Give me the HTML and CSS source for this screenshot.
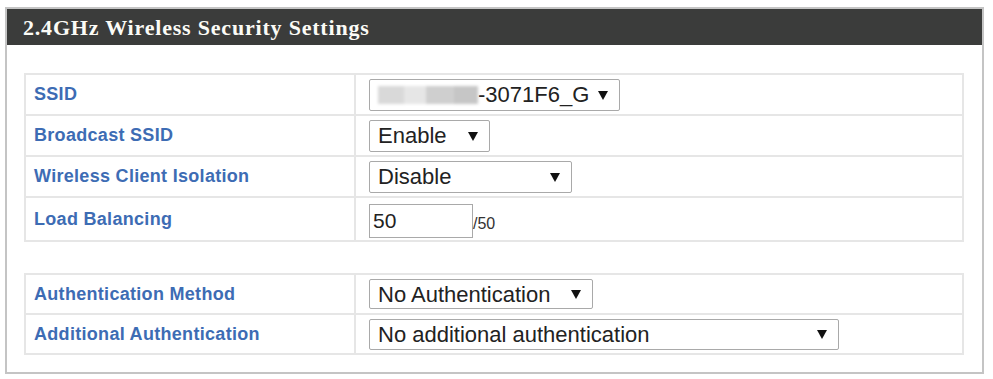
FILE: index.html
```html
<!DOCTYPE html>
<html lang="en">
<head>
  <meta charset="UTF-8" />
  <title>2.4GHz Wireless Security Settings</title>
  <link rel="stylesheet" href="styles.css">
</head>
<body>
  <div class="panel">
    <div class="panel-title">2.4GHz Wireless Security Settings</div>

    <div class="panel-body">
      <!-- basic wireless options -->
      <table class="settings">
        <tr>
          <td class="label">SSID</td>
          <td class="value">
            <span class="dropdown">
              <select class="ssid-select">
                <option>-3071F6_G</option>
              </select>
              <span class="blur"><i></i><i></i><i></i><i></i></span>
            </span>
          </td>
        </tr>
        <tr>
          <td class="label">Broadcast SSID</td>
          <td class="value">
            <span class="dropdown">
              <select class="w-enable">
                <option>Enable</option>
                <option>Disable</option>
              </select>
            </span>
          </td>
        </tr>
        <tr>
          <td class="label">Wireless Client Isolation</td>
          <td class="value">
            <span class="dropdown">
              <select class="w-disable">
                <option>Disable</option>
                <option>Enable</option>
              </select>
            </span>
          </td>
        </tr>
        <tr class="tall">
          <td class="label">Load Balancing</td>
          <td class="value">
            <input type="text" class="num" value="50"><span class="max">/50</span>
          </td>
        </tr>
      </table>

      <!-- authentication -->
      <table class="settings auth">
        <tr>
          <td class="label">Authentication Method</td>
          <td class="value">
            <span class="dropdown">
              <select class="w-auth">
                <option>No Authentication</option>
              </select>
            </span>
          </td>
        </tr>
        <tr>
          <td class="label">Additional Authentication</td>
          <td class="value">
            <span class="dropdown">
              <select class="w-additional">
                <option>No additional authentication</option>
              </select>
            </span>
          </td>
        </tr>
      </table>
    </div>
  </div>
</body>
</html>
```

FILE: styles.css
```css
body {
  margin: 0;
  background: #fff;
  font-family: "Liberation Sans", Arial, sans-serif;
}

.panel {
  margin: 7px 0 0 5px;
  width: 979px;
  box-sizing: border-box;
  border: 2px solid #c4c4c4;
  background: #fff;
}

.panel-title {
  height: 36px;
  line-height: 37px;
  background: #3b3c3b;
  color: #fbfbf6;
  font-family: "Liberation Serif", "Times New Roman", serif;
  font-weight: bold;
  font-size: 22px;
  letter-spacing: 0.8px;
  padding-left: 16px;
}

.panel-body {
  padding: 28px 18px 17px 17px;
}

.settings {
  width: 100%;
  border-collapse: collapse;
}

.settings td {
  border: 2px solid #e6e6e6;
  height: 39px;
  padding: 0;
}

.settings tr.tall td {
  height: 42px;
}

.settings.auth {
  margin-top: 31px;
}

.settings.auth td {
  height: 38px;
}

.label {
  width: 320px;
  padding-left: 8px !important;
  color: #3d6cb4;
  font-weight: bold;
  font-size: 18px;
  letter-spacing: 0.3px;
}

.value {
  padding-left: 13px !important;
}

/* selects */
.dropdown {
  position: relative;
  display: inline-block;
  vertical-align: middle;
}

.dropdown::after {
  content: "";
  position: absolute;
  right: 12px;
  top: 50%;
  margin-top: -4px;
  border-left: 5px solid transparent;
  border-right: 5px solid transparent;
  border-top: 9px solid #111;
  pointer-events: none;
}

.dropdown select {
  -webkit-appearance: none;
  appearance: none;
  height: 32px;
  border: 1px solid #a9a9a9;
  border-radius: 2px;
  background: #fff;
  color: #222;
  font-family: "Liberation Sans", Arial, sans-serif;
  font-size: 22px;
  padding: 0 0 0 8px;
  margin: 0;
  display: block;
}

.ssid-select { width: 251px; padding-left: 108px !important; }
.w-enable { width: 121px; }
.w-disable { width: 203px; }
.w-auth { width: 224px; height: 30px !important; }
.w-additional { width: 470px; height: 31px !important; }

/* blurred part of the ssid */
.blur {
  position: absolute;
  left: 9px;
  top: 7px;
  height: 18px;
  display: flex;
  filter: blur(1.5px);
  pointer-events: none;
}

.blur i {
  display: block;
  height: 18px;
}

.blur i:nth-child(1) { width: 26px; background: #d9d9d9; }
.blur i:nth-child(2) { width: 22px; background: #e6e6e6; }
.blur i:nth-child(3) { width: 28px; background: #cfcfcf; }
.blur i:nth-child(4) { width: 24px; background: #c6c6c6; }

.num {
  width: 104px;
  height: 34px;
  box-sizing: border-box;
  border: 1px solid #a9a9a9;
  font-family: "Liberation Sans", Arial, sans-serif;
  font-size: 21px;
  color: #222;
  padding: 0 3px;
  margin: 3px 0 0 0;
  vertical-align: bottom;
}

.max {
  font-size: 16px;
  color: #333;
  vertical-align: bottom;
  line-height: 16px;
  display: inline-block;
  padding-bottom: 6px;
}
```
